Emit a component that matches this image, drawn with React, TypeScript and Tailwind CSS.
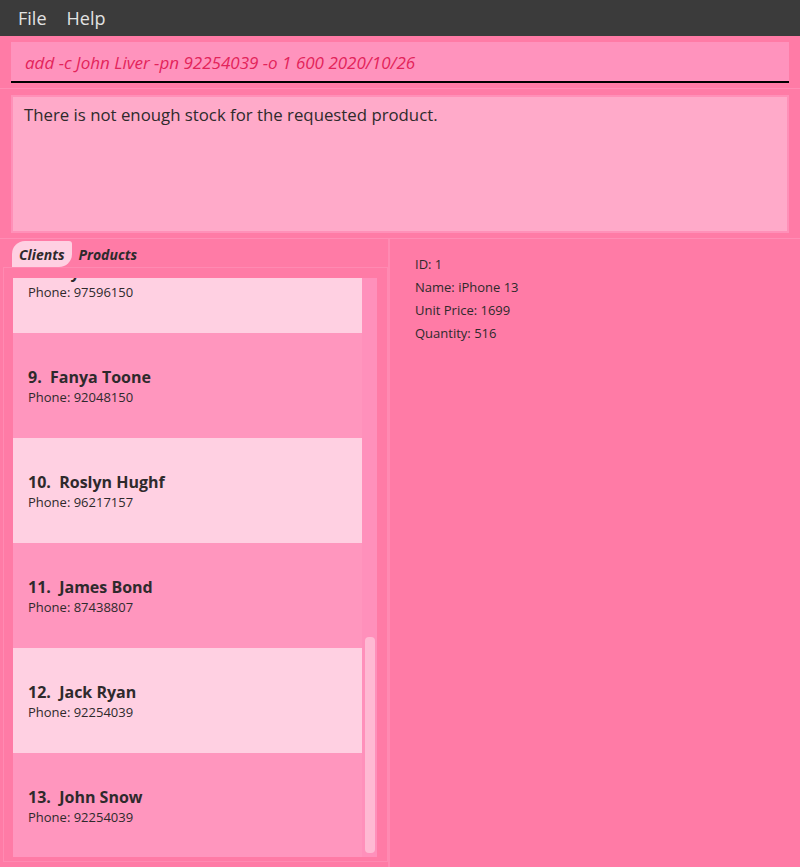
import React from "react";

const clients = [
  { id: 8, name: "Roy Balakrishnan", phone: "97596150" },
  { id: 9, name: "Fanya Toone", phone: "92048150" },
  { id: 10, name: "Roslyn Hughf", phone: "96217157" },
  { id: 11, name: "James Bond", phone: "87438807" },
  { id: 12, name: "Jack Ryan", phone: "92254039" },
  { id: 13, name: "John Snow", phone: "92254039" },
];

export default function App() {
  return (
    <div
      className="w-[800px] h-[867px] flex flex-col bg-[#ff7ba6] overflow-hidden"
      style={{ fontFamily: '"Open Sans", "Noto Sans", sans-serif' }}
    >
      {/* Menu bar */}
      <div className="h-[36px] shrink-0 bg-[#3b3b3b] flex items-center gap-[20px] pl-[18px] text-[18px] text-[#e2e2e2]">
        <span>File</span>
        <span>Help</span>
      </div>

      {/* Command box */}
      <div className="h-[53px] shrink-0 pt-[6px] pl-[11px] pr-[11px] border-b border-[#ff8db5]">
        <div className="h-[41px] bg-[#ff93bd] border-b-2 border-black flex items-center pl-[14px] pt-[2px] text-[17px] italic text-[#e3245a]">
          add -c John Liver -pn 92254039 -o 1 600 2020/10/26
        </div>
      </div>

      {/* Result display */}
      <div className="h-[150px] shrink-0 pt-[6px] pl-[11px] pr-[11px] border-b border-[#ff8db5]">
        <div className="h-[138px] bg-[#ffaac9] border-2 border-[#ff90b8] pl-[11px] pt-[5px] text-[16.8px] text-[#2e2a2c]">
          There is not enough stock for the requested product.
        </div>
      </div>

      {/* Bottom */}
      <div className="flex-1 flex min-h-0">
        <div className="w-[390px] shrink-0 flex flex-col border-r-2 border-[#ff8ab2] min-h-0">
          <div className="h-[28px] shrink-0 flex items-end pl-[12px] gap-[7px] pt-[2px]">
            <div className="h-[26px] px-[7px] bg-[#ffd0e2] rounded-tl-[13px] rounded-br-[13px] rounded-tr-[3px] flex items-center text-[14px] font-bold italic text-[#2e2a2c]">
              Clients
            </div>
            <div className="h-[26px] flex items-center text-[14px] font-bold italic text-[#2e2a2c]">
              Products
            </div>
          </div>
          <div className="flex-1 ml-[3px] mb-[5px] border border-[#ff8ab2] min-h-0 pt-[10px] pl-[9px] pr-[10px] pb-[4px] flex">
            <div className="flex-1 overflow-hidden min-h-0">
              <div className="-mt-[50px]">
                {clients.map((c, i) => (
                  <div
                    key={c.id}
                    className={`h-[105px] flex flex-col justify-center pl-[15px] text-[#2e2a2c] ${
                      i % 2 === 0 ? "bg-[#ffd0e2]" : "bg-[#ff96be]"
                    }`}
                  >
                    <div className="text-[16px] font-bold leading-[22px]">
                      {c.id}.&nbsp;&nbsp;{c.name}
                    </div>
                    <div className="text-[13px] leading-[18px]">Phone: {c.phone}</div>
                  </div>
                ))}
              </div>
            </div>
            <div className="w-[15px] bg-[#ff90bb] flex flex-col justify-end items-center pb-[4px]">
              <div className="w-[10px] h-[216px] bg-[#ffb9d3] rounded-[4px]" />
            </div>
          </div>
        </div>
        <div className="flex-1 pl-[25px] pt-[14px] text-[13px] leading-[23px] text-[#2e2a2c]">
          <div>ID: 1</div>
          <div>Name: iPhone 13</div>
          <div>Unit Price: 1699</div>
          <div>Quantity: 516</div>
        </div>
      </div>
    </div>
  );
}
